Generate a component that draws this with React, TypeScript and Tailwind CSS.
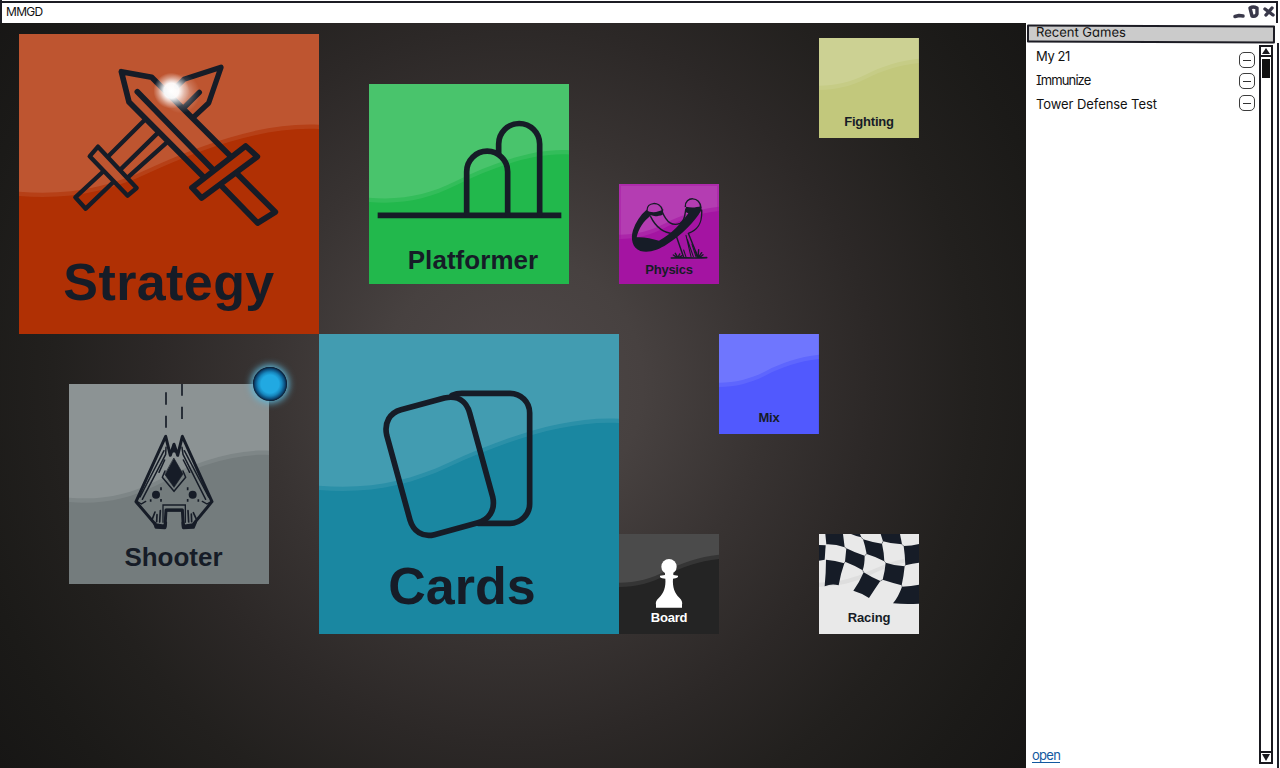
import type { ReactNode } from "react";

const INK = "#161c27";

type TileProps = {
  label: string;
  place: string;
  color: string;
  text: string;
  size: number;
  left: number;
  right: number;
  band?: number;
  children?: ReactNode;
};

function wave(size: number, l: number, r: number) {
  const d = l - r;
  const p = (fx: number, fy: number) => `${(size * fx).toFixed(1)} ${(r + d * fy).toFixed(1)}`;
  if (size > 100) {
    return `M0 0 V${l} C${p(0.17, 1.06)} ${p(0.3, 0.93)} ${p(0.43, 0.66)} C${p(0.62, 0.27)} ${p(0.82, -0.04)} ${size} ${r} V0 Z`;
  }
  return `M0 0 V${l} C${p(0.17, 1)} ${p(0.33, 0.84)} ${p(0.47, 0.58)} C${p(0.62, 0.3)} ${p(0.8, 0.07)} ${size} ${r} V0 Z`;
}

function Tile({ label, place, color, text, size, left, right, band = 4.3, children }: TileProps) {
  return (
    <section className={`relative flex flex-col items-center justify-end ${place} ${color}`}>
      <svg className="absolute inset-0 h-full w-full" viewBox={`0 0 ${size} ${size}`}>
        <path d={wave(size, left, right)} fill="#fff" fillOpacity="0.08" />
        <path d={wave(size, left - band, right - band)} fill="#fff" fillOpacity="0.11" />
      </svg>
      {children}
      <h2 className={`relative font-bold leading-none whitespace-nowrap ${text}`}>{label}</h2>
    </section>
  );
}

function Art({ box, children }: { box: string; children: ReactNode }) {
  return (
    <svg className="absolute inset-0 h-full w-full" viewBox={box} fill="none" stroke={INK} strokeLinecap="round" strokeLinejoin="round">
      {children}
    </svg>
  );
}

function Swords() {
  return (
    <Art box="57 42 900 900">
      <defs>
        <radialGradient id="spark">
          <stop offset="0" stopColor="#fff" />
          <stop offset="0.42" stopColor="#fff" stopOpacity="0.95" />
          <stop offset="0.72" stopColor="#fff" stopOpacity="0.4" />
          <stop offset="1" stopColor="#fff" stopOpacity="0" />
        </radialGradient>
      </defs>
      <g strokeWidth="13">
        <path d="M434 300 L328 406 M472 340 L362 448 M500 368 L386 470" />
        <path d="M294 380 L410 504 L383 527 L269 409 Z" />
        <path d="M308 456 L226 532 L257 566 L340 486" />
      </g>
      <path d="M530 200 L552 178 L663 142 L626 249 L580 292 M598 217 L553 262" strokeWidth="16" />
      <g strokeWidth="17">
        <path d="M688 405 L455 172 L364 155 L387 246 L610 470 M412 215 L638 448" />
        <path d="M737 378 L772 410 L605 534 L576 503 Z" />
        <path d="M712 462 L826 576 L773 609 L667 500" />
      </g>
      <circle cx="514" cy="212" r="54" fill="url(#spark)" stroke="none" />
      <ellipse cx="542" cy="220" rx="58" ry="60" fill="url(#spark)" stroke="none" opacity="0.35" />
    </Art>
  );
}

function Hills() {
  return (
    <Art box="27 24 600 600">
      <g strokeWidth="17">
        <path d="M53 418 H604" strokeLinecap="butt" />
        <path d="M416 232 V204 A61.5 61.5 0 0 1 539 204 V414" />
        <path d="M320 414 V287 A61.5 61.5 0 0 1 443 287 V414" />
      </g>
    </Art>
  );
}

function Deck() {
  return (
    <Art box="12 12 900 900">
      <g strokeWidth="17">
        <path d="M411 196 Q425 190 440 190 H585 A59 59 0 0 1 644 249 V521 A59 59 0 0 1 585 580 H490" />
        <path d="M258 239 L388 204 C428 195 454 213 464 249 L533 500 C542 540 522 570 486 579 L358 614 C322 623 295 604 285 570 L215 315 C207 277 225 248 258 239 Z" />
      </g>
    </Art>
  );
}

function Slingshot() {
  return (
    <Art box="27 24 300 300">
      <path d="M30 188 V27 H324 V106" stroke="#a414a2" strokeOpacity="0.4" strokeWidth="6" strokeLinecap="butt" strokeLinejoin="miter" />
      <g strokeWidth="4.2">
        <path d="M111 104 C110 78 149 74 157 102 M226 92 C224 60 272 60 273 96" />
        <path d="M157 108 C170 140 188 151 210 142 C228 134 224 108 228 98 M122 122 C136 151 160 171 192 174" />
        <path d="M275 102 C277 140 266 162 235 172 L264 244 M198 178 L221 244" />
        <path d="M228 178 L243 242 M232 190 L250 242 M221 222 L228 243 M246 205 L258 242" strokeWidth="3.2" />
        <path d="M184 246 C215 244 250 248 290 245" strokeWidth="5" />
        <path d="M190 237 L200 244 M196 232 L203 244 M209 234 L204 244 M256 226 L262 243 M266 221 L264 243 M275 230 L266 243 M279 236 L270 244 M216 239 L208 244" />
      </g>
      <path d="M109 102 C122 112 144 110 160 100 L158 116 C145 121 132 122 123 118 C100 137 86 157 80 184 C98 182 126 188 147 194 C184 174 214 142 235 112 L228 109 L228 92 C243 96 259 95 273 90 L274 103 C256 136 216 176 171 205 C144 223 115 232 91 225 C67 217 61 188 69 163 C77 139 90 118 109 102 Z" fill={INK} stroke="none" />
    </Art>
  );
}

function Ship() {
  return (
    <Art box="27 72 600 600">
      <path d="M366 72 V107 M366 140 V177 M318 97 V134 M318 167 V203" strokeWidth="5" strokeLinecap="butt" />
      <path d="M317 229 L228 425 L287 494 L315 499 L318 450 H367 L370 499 L399 494 L456 425 L367 229 L353 286 L342 253 L331 286 Z" strokeWidth="9" />
      <path d="M342 250 L350 276 H334 Z" fill={INK} strokeWidth="3" />
      <path d="M284 490 L288 502 L315 503 L317 488 M369 488 L370 503 L400 502 L407 486 M320 451 H366" strokeWidth="9" />
      <path d="M318 262 L317 283 L247 418 M312 272 L240 411 M297 337 L314 300 M366 262 L369 283 L437 418 M373 272 L446 411 M389 337 L370 300" strokeWidth="4.5" />
      <path d="M342 295 L369 342 L342 382 L315 344 Z" fill={INK} strokeWidth="2" />
      <path d="M315 333 L307 352 L342 394 L377 352 L369 333" strokeWidth="4.5" />
      <circle cx="288" cy="404" r="12" fill={INK} stroke="none" />
      <circle cx="398" cy="404" r="12" fill={INK} stroke="none" />
      <path d="M303 382 V391 M303 417 V425 M272 418 V425 M383 382 V391 M383 417 V425 M415 418 V425" strokeWidth="5" strokeLinecap="butt" />
      <path d="M231 424 L244 432 L257 424 M454 424 L441 432 L427 424 M309 487 V435 H376 V487" strokeWidth="4" strokeLinejoin="miter" />
      <path d="M301 452 L299 486 M291 464 L290 485 M285 456 L277 477 M384 452 L386 486 M394 462 L395 485 M400 458 L408 475" strokeWidth="5" />
    </Art>
  );
}

function Pawn() {
  return (
    <svg className="absolute inset-0 h-full w-full" viewBox="21 24 300 300" fill="#fff">
      <circle cx="171" cy="122" r="23" />
      <path d="M159 141 H184 V147 L198 149 V153 C195 157 186 157 183 158 C181 182 188 202 202 215 C210 222 212 230 210 236 V245 H132 V236 C130 229 133 222 141 215 C155 202 162 182 160 158 C154 157 146 157 144 153 V149 L159 147 Z" />
    </svg>
  );
}

function Flag() {
  return (
    <svg className="absolute inset-0 h-full w-full" viewBox="21 24 300 300" fill={INK}>
      <path d="M21 170 C80 170 130 155 170 136 C230 108 280 94 321 92 V103 C280 106 230 120 175 147 C130 168 80 182 21 182 Z" fill="#dadada" fillOpacity="0.75" />
      <path d="M40 24 H93 L98 64 Q71 54 43 55 Z" />
      <path d="M117 24 H144 L148 34 Q133 31 117 24 Z" />
      <path d="M206 24 H264 L270 55 Q238 54 213 46 Z" />
      <path d="M21 57 L41 58 L38 101 L21 104 Z" />
      <path d="M103 67 Q128 80 158 89 Q158 116 152 133 Q128 118 99 107 Z" />
      <path d="M153 40 Q183 50 210 53 Q216 79 217 106 Q188 91 164 84 Q160 61 153 40 Z" />
      <path d="M275 60 Q299 60 321 54 V110 Q302 112 280 118 Q279 87 275 60 Z" />
      <path d="M42 101 Q69 103 97 112 Q86 143 80 178 Q59 172 38 181 Q42 139 42 101 Z" />
      <path d="M155 139 Q180 155 205 165 Q189 188 171 216 Q149 201 124 194 Q142 170 155 139 Z" />
      <path d="M221 110 Q247 119 278 121 Q275 151 269 178 Q240 170 212 161 Q219 134 221 110 Z" />
      <path d="M270 182 Q298 181 321 176 V233 Q282 236 243 232 Q260 211 270 182 Z" />
      <path
        d="M98 64 L103 67 M152 133 L155 139 M210 53 L213 46 M270 55 L275 60 M217 106 L221 110 M278 121 L280 118 M158 89 L164 84 M97 112 L99 107 M205 165 L212 161 M148 34 L153 40 M269 178 L270 182"
        stroke={INK}
        strokeWidth="3"
        strokeOpacity="0.6"
      />
    </svg>
  );
}

const games = [
  { name: "My 21", style: "tracking-[-0.4px]", button: "mt-[8px]" },
  { name: "Immunize", style: "tracking-[-0.9px] word-spacing-normal", button: "mt-[5px]" },
  { name: "Tower Defense Test", style: "tracking-[-0.08px]", button: "mt-[3px]" },
];

function Sidebar() {
  return (
    <aside className="flex w-[254px] flex-col bg-white pl-px">
      <header className="mt-[2px] h-[18px] w-[248px] rotate-[0.2deg] rounded-[1px] border-2 border-[#1c1c24] bg-[#cbcbcb] pl-[7px] text-[13px] leading-[10px]">
        Recent Games
      </header>
      <div className="flex min-h-0 flex-1">
        <div className="flex flex-1 flex-col justify-between pt-[1px] pb-[5px]">
          <ul className="flex flex-col pl-[9px]">
            {games.map((g) => (
              <li key={g.name} className="flex h-6 items-start justify-between pr-[4px]">
                <span className={`text-[13px] leading-6 ${g.style}`}>{g.name}</span>
                <button aria-label="Remove" className={`flex h-4 w-4 shrink-0 items-center justify-center rounded-[5px] border border-[#3c3c3c] ${g.button}`}>
                  <span className="h-px w-[8px] bg-[#333]" />
                </button>
              </li>
            ))}
          </ul>
          <a className="ml-[5px] self-start border-b border-[#1259a0] text-[13px] leading-[13px] tracking-[-0.7px] text-[#1259a0]">open</a>
        </div>
        <div className="mt-[2px] mb-[4px] flex w-[14px] flex-col border-2 border-[#19191f]">
          <div className="flex h-[10px] items-center justify-center border-b-2 border-[#19191f]">
            <svg width="8" height="6" viewBox="0 0 8 6"><path d="M4 0 L8 6 H0 Z" fill="#19191f" /></svg>
          </div>
          <div className="mt-[2px] ml-px h-[19px] w-[8px] bg-[#111]" />
          <div className="mt-auto flex h-[11px] items-center justify-center border-t-2 border-[#19191f]">
            <svg width="8" height="7" viewBox="0 0 8 7"><path d="M0 0 H8 L4 7 Z" fill="#19191f" /></svg>
          </div>
        </div>
        <div className="ml-[4px] w-[3px] border-l-2 border-[#20202a]" />
      </div>
    </aside>
  );
}

export default function App() {
  return (
    <div className="flex h-[768px] w-[1280px] flex-col overflow-hidden bg-white font-['Inter',sans-serif] text-[#111] [font-feature-settings:'cv11','cv08']">
      <header className="flex h-[23px] shrink-0 justify-between border-l-2 border-[#1c1c24] pr-[2px]">
        <div className="mt-[1px] flex flex-1 items-start border-t-2 border-r-2 border-[#1c1c24] pl-[4px]">
          <span className="flex-1 text-[12px] leading-[17px] tracking-[-0.7px]">MMGD</span>
          <svg className="-mr-px" width="46" height="18" viewBox="0 0 46 18" fill="none" stroke="#39384a" strokeLinecap="round" strokeLinejoin="round">
            <path d="M4 13.5 L8 12.5 L12 13" strokeWidth="3.5" />
            <path d="M19 5 Q22 3 26 5 L26 11 Q25 14 21 13 Z" strokeWidth="3.4" />
            <path d="M34 6 L42 12 M41 5 L35 12" strokeWidth="3.4" />
          </svg>
        </div>
      </header>
      <div className="flex min-h-0 flex-1">
        <main className="grid w-[1026px] auto-rows-[50px] grid-cols-[repeat(18,50px)] bg-[radial-gradient(circle_at_513px_361px,#4f4848_0px,#474140_130px,#383332_250px,#2c2827_360px,#22201e_460px,#1b1a18_560px,#171615_640px)] pt-[11px] pl-[19px] font-['Liberation_Sans',Arial,sans-serif] text-[#161c27]">
          <Tile label="Strategy" place="col-[1/span_6] row-[1/span_6] pb-[26px]" color="bg-[#b03004]" text="text-[52px] tracking-[0.4px]" size={300} left={162} right={95}>
            <Swords />
          </Tile>
          <Tile label="Platformer" place="col-[8/span_4] row-[2/span_4] pb-[11px] pl-[8px]" color="bg-[#22b84c]" text="text-[26px] tracking-[0.05px]" size={200} left={118} right={70.5}>
            <Hills />
          </Tile>
          <Tile label="Fighting" place="col-[17/span_2] row-[1/span_2] translate-y-1 pb-[10px]" color="bg-[#c2c87c]" text="text-[13px] tracking-[-0.2px]" size={100} left={52} right={25}>
            <span className="absolute inset-y-0 right-0 w-px bg-black/5" />
          </Tile>
          <Tile label="Physics" place="col-[13/span_2] row-[4/span_2] pb-[8px]" color="bg-[#a414a2]" text="text-[13px] tracking-[-0.25px]" size={100} left={55} right={27}>
            <Slingshot />
          </Tile>
          <Tile label="Mix" place="col-[15/span_2] row-[7/span_2] pb-[10px]" color="bg-[#5159fe]" text="text-[13px] tracking-[-0.2px]" size={100} left={53} right={25}>
            <span className="absolute inset-y-0 right-0 w-px bg-black/5" />
          </Tile>
          <Tile label="Cards" place="col-[7/span_6] row-[7/span_6] pb-[22px] pr-[14px]" color="bg-[#1a87a1]" text="text-[52px]" size={300} left={156} right={89}>
            <Deck />
          </Tile>
          <Tile label="Shooter" place="col-[2/span_4] row-[8/span_4] pb-[14px] pl-[9px]" color="bg-[#747c7d]" text="text-[26px]" size={200} left={118} right={71}>
            <Ship />
            <div className="absolute -top-[17px] -right-[18px] h-[34px] w-[34px] rounded-full bg-[radial-gradient(circle,#21a9e2_0px,#21a9e2_9px,#1686bd_12px,#0c4a78_15px,#06182f_17px)] shadow-[0_0_7px_2px_#5fb8da]" />
          </Tile>
          <Tile label="Board" place="col-[13/span_2] row-[11/span_2] pb-[10px]" color="bg-[#242424]" text="text-[13px] text-white tracking-[-0.25px]" size={100} left={53} right={25}>
            <Pawn />
          </Tile>
          <Tile label="Racing" place="col-[17/span_2] row-[11/span_2] pb-[10px]" color="bg-[#e9e9e9]" text="text-[13px] tracking-[-0.15px]" size={100} left={0} right={0} band={0}>
            <Flag />
          </Tile>
        </main>
        <Sidebar />
      </div>
    </div>
  );
}
